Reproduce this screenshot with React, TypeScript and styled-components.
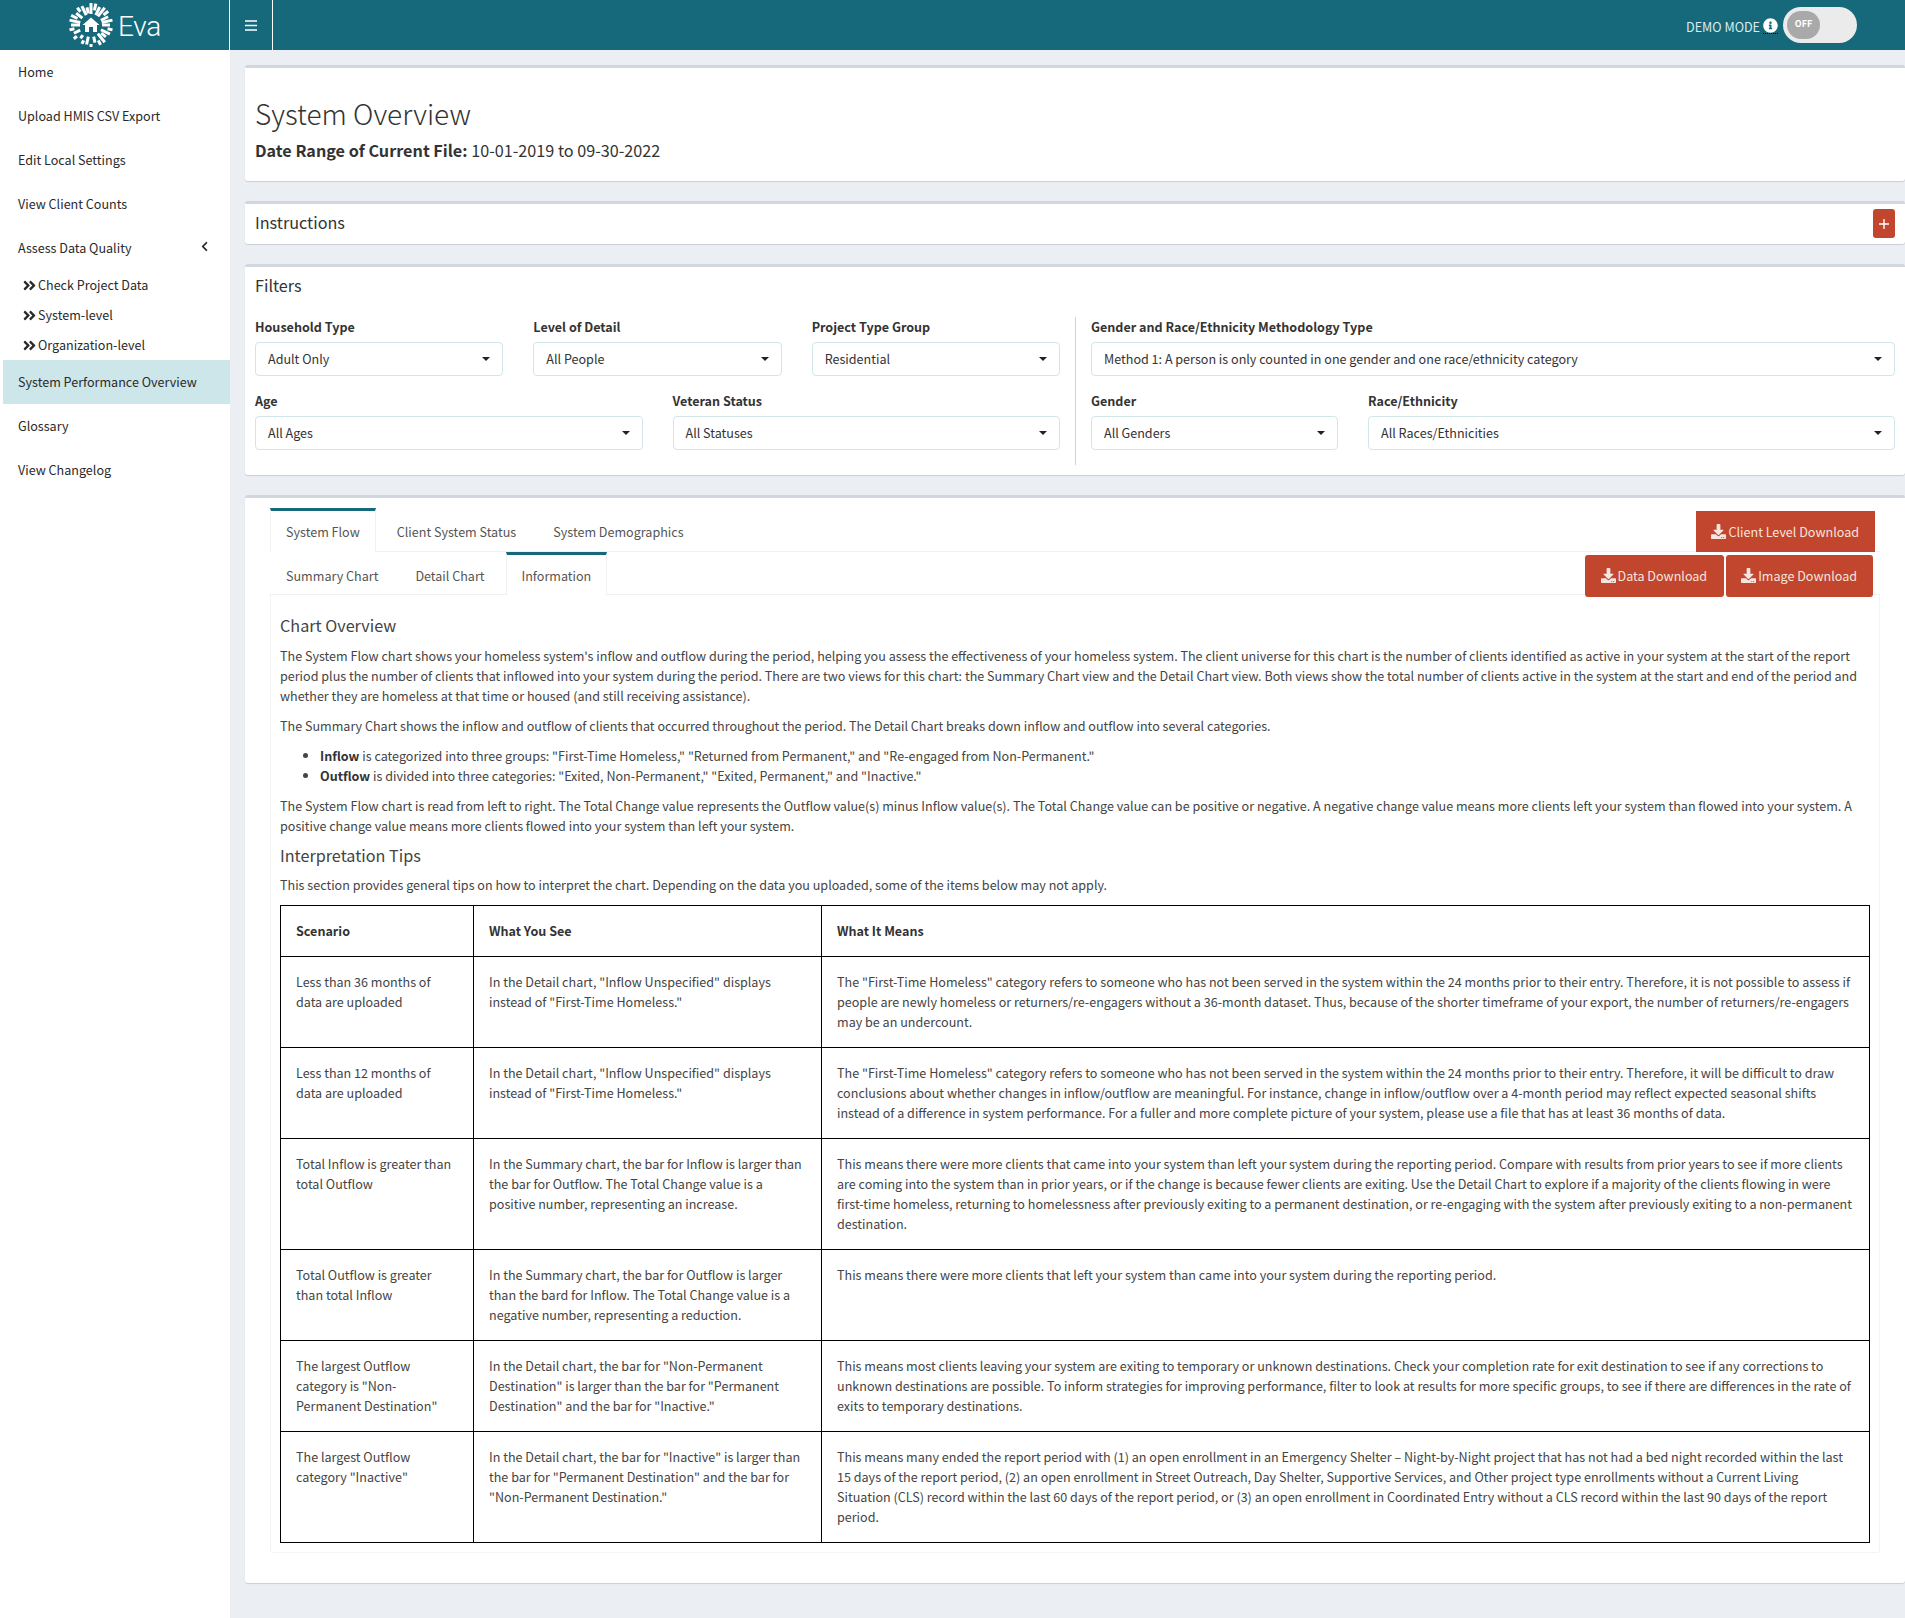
import React from "react";
import styled, { createGlobalStyle } from "styled-components";
import { FaAngleDoubleRight, FaChevronLeft, FaDownload, FaInfoCircle } from "react-icons/fa";

const TEAL = "#16697a";
const RED = "#c1462d";
const FONT = `"Noto Sans CJK SC", "Noto Sans", "Liberation Sans", sans-serif`;

const Global = createGlobalStyle`
  html, body { margin: 0; padding: 0; background: #ebeef3; }
  body { font-family: ${FONT}; font-size: 12.57px; line-height: 20px; color: #444; }
  * { box-sizing: border-box; }
`;

const Page = styled.div`
  width: 1905px;
  height: 1618px;
  display: flex;
  flex-direction: column;
  overflow: hidden;
`;

const Header = styled.header`
  height: 50px;
  flex: none;
  background: ${TEAL};
  display: flex;
  align-items: stretch;
`;

const Brand = styled.div`
  width: 230px;
  border-right: 1px solid #fff;
  display: flex;
  align-items: center;
  justify-content: center;
  gap: 4px;
  color: #fff;
`;

const BrandName = styled.span`
  font-family: Roboto, sans-serif;
  font-weight: 300;
  font-size: 28px;
  line-height: 50px;
  padding-top: 3px;
  letter-spacing: -0.2px;
`;

const Burger = styled.div`
  width: 43px;
  border-right: 1px solid #fff;
  display: flex;
  align-items: center;
  justify-content: center;
`;

const HeaderRight = styled.div`
  margin-left: auto;
  margin-right: 48px;
  display: flex;
  align-items: center;
  color: #dcebef;
`;

const DemoLabel = styled.span`
  margin-right: 3px;
  padding-top: 4px;
`;

const InfoWrap = styled.span`
  display: flex;
  color: #fff;
  font-size: 15px;
  border-bottom: 1px dotted #000;
  margin: 1px 5px 0 0;
`;

const Toggle = styled.div`
  width: 74px;
  height: 36px;
  border-radius: 18px;
  background: #ebebeb;
  padding: 4px;
`;

const Thumb = styled.div`
  width: 33px;
  height: 28px;
  border-radius: 14px;
  background: #a9a9a9;
  color: #fff;
  font-size: 9px;
  font-weight: 700;
  line-height: 26px;
  text-align: center;
`;

const Body = styled.div`
  flex: 1;
  display: flex;
  min-height: 0;
`;

const Sidebar = styled.nav`
  width: 230px;
  flex: none;
  background: #fff;
  color: #2a2a2a;
  padding-left: 3px;
`;

const NavItem = styled.div<{ $active?: boolean }>`
  height: 44px;
  display: flex;
  align-items: center;
  justify-content: space-between;
  padding: 0 20px 0 15px;
  background: ${(p) => (p.$active ? "#cde6ea" : "transparent")};
  svg { margin-top: -3px; }
`;

const SubItem = styled.div`
  height: 30px;
  display: flex;
  align-items: center;
  gap: 1px;
  padding-left: 19px;
`;

const Main = styled.main`
  flex: 1;
  min-width: 0;
  padding: 15px 0 0 15px;
  display: flex;
  flex-direction: column;
  gap: 20px;
`;

const Box = styled.section`
  background: #fff;
  border-top: 3px solid #d2d6de;
  border-radius: 3px;
  box-shadow: 0 1px 1px rgba(0, 0, 0, 0.14);
`;

const TitleBox = styled(Box)`
  height: 116px;
  padding: 25px 10px 0;
`;

const PageTitle = styled.h1`
  margin: 0;
  font-size: 28px;
  line-height: 40px;
  font-weight: 300;
  color: #333;
`;

const DateLine = styled.p`
  margin: 5px 0 0;
  font-size: 16.2px;
  line-height: 24px;
  color: #333;
  strong { font-weight: 700; }
`;

const InstructionBox = styled(Box)`
  height: 43px;
  display: flex;
  align-items: center;
  justify-content: space-between;
  padding: 0 10px 1px;
`;

const BoxTitle = styled.h3`
  margin: 0;
  font-size: 16.2px;
  line-height: 20px;
  font-weight: 400;
  color: #333;
`;

const InstructionTitle = styled(BoxTitle)`
  padding-bottom: 4px;
`;

const PlusButton = styled.button`
  width: 22px;
  height: 29px;
  border: 0;
  padding: 0;
  border-radius: 3px;
  background: ${RED};
  display: flex;
  align-items: center;
  justify-content: center;
`;

const FilterBox = styled(Box)`
  height: 211px;
  padding: 8px 10px 10px;
`;

const FilterGrid = styled.div`
  margin-top: 22px;
  display: grid;
  grid-template-columns: 805px 1fr;
`;

const FilterSide = styled.div<{ $divided?: boolean }>`
  display: flex;
  flex-direction: column;
  gap: 15px;
  padding-left: ${(p) => (p.$divided ? "15px" : "0")};
  margin-left: ${(p) => (p.$divided ? "15px" : "0")};
  padding-bottom: 15px;
  border-left: ${(p) => (p.$divided ? "1px solid #d2d2d2" : "0")};
`;

const FilterRow = styled.div<{ $cols: string }>`
  display: grid;
  grid-template-columns: ${(p) => p.$cols};
  gap: 30px;
`;

const FieldLabel = styled.label`
  display: block;
  font-weight: 700;
  margin-bottom: 5px;
  color: #333;
`;

const Select = styled.div`
  height: 34px;
  display: flex;
  align-items: center;
  justify-content: space-between;
  padding: 0 12px;
  border: 1px solid #d2e6ea;
  border-radius: 4px;
  color: #333;
  white-space: nowrap;
`;

const Caret = styled.span`
  width: 0;
  height: 0;
  border-left: 4px solid transparent;
  border-right: 4px solid transparent;
  border-top: 4px solid #222;
`;

const TabsBox = styled(Box)`
  height: 1088px;
  padding: 10px 25px 0;
`;

const TabBar = styled.div<{ $height: number }>`
  height: ${(p) => p.$height}px;
  display: flex;
  align-items: stretch;
  border-bottom: 1px solid #f1f1f1;
`;

const Tab = styled.div<{ $active?: boolean }>`
  padding: 1px 15px 0;
  margin-right: 5px;
  display: flex;
  align-items: center;
  color: #555;
  border-top: 3px solid ${(p) => (p.$active ? TEAL : "transparent")};
  border-left: 1px solid ${(p) => (p.$active ? "#f1f1f1" : "transparent")};
  border-right: 1px solid ${(p) => (p.$active ? "#f1f1f1" : "transparent")};
  ${(p) => (p.$active ? "margin-bottom: -1px; background: #fff;" : "")}
`;

const SubTab = styled(Tab)`
  padding-top: 2px;
`;

const BarActions = styled.div<{ $gap: number; $end: number }>`
  margin-left: auto;
  margin-right: ${(p) => p.$end}px;
  display: flex;
  gap: ${(p) => p.$gap}px;
`;

const DownloadButton = styled.button`
  border: 0;
  background: ${RED};
  color: #f6e4df;
  font-family: ${FONT};
  font-size: 12.57px;
  padding: 0 16px 0 15.5px;
  display: flex;
  align-items: center;
  gap: 2px;
  height: 41px;
  margin-top: 3px;
  svg { font-size: 15px; }
`;

const RoundedDownload = styled(DownloadButton)<{ $wide?: boolean }>`
  padding: ${(p) => (p.$wide ? "0 17px 2px 16px" : "0 16px 2px 15px")};
  border-radius: 3px;
  height: 42px;
`;

const TabPane = styled.div`
  height: 958px;
  padding: 10px 9px 0;
  border: 1px solid #f4f4f4;
  border-top: 0;
  border-radius: 0 0 3px 3px;
`;

const SectionHeading = styled.h4<{ $tight?: boolean }>`
  margin: ${(p) => (p.$tight ? "-1px 0 10px" : "10px 0 11px")};
  font-size: 16.2px;
  line-height: 20px;
  font-weight: 400;
  color: #444;
`;

const Para = styled.p`
  margin: 0 0 10px;
`;

const BulletList = styled.ul`
  margin: 0 0 10px;
  padding-left: 40px;
  b { font-weight: 700; color: #333; }
`;

const TipsTable = styled.table`
  width: 100%;
  table-layout: fixed;
  border-collapse: collapse;
  th, td {
    border: 1px solid #000;
    padding: 15px;
    vertical-align: top;
    text-align: left;
  }
  th { font-weight: 700; color: #333; }
`;

const rayData: [number, number][] = [
  [11, 19], [17, 22], [11, 21], [13, 19], [11, 22], [17, 22], [12, 18], [19, 22], [12, 20], [17, 21],
  [13, 17], [18, 22], [12, 19], [17, 22], [11, 20], [11, 22], [15, 22], [11, 19], [17, 22], [11, 21],
  [12, 18], [11, 22], [15, 22], [11, 20], [11, 22], [16, 22], [11, 19], [11, 22],
];

const Logo = () => (
  <svg width="46" height="46" viewBox="-23 -23 46 46" aria-hidden="true">
    {rayData.map(([a, b], i) => {
      const t = (i / rayData.length) * Math.PI * 2;
      return (
        <line
          key={i}
          x1={Math.cos(t) * a}
          y1={Math.sin(t) * a}
          x2={Math.cos(t) * b}
          y2={Math.sin(t) * b}
          stroke="#fff"
          strokeWidth="3"
        />
      );
    })}
    <path d="M0 -7.5 L8.5 0 L6 0 L6 7 L2 7 L2 2 L-2 2 L-2 7 L-6 7 L-6 0 L-8.5 0 Z" fill="#fff" />
  </svg>
);

const BurgerIcon = () => (
  <svg width="12" height="11" viewBox="0 0 12 11" aria-hidden="true">
    <path d="M0 1h12M0 5.5h12M0 10h12" stroke="#fff" strokeWidth="1.5" />
  </svg>
);

const PlusIcon = () => (
  <svg width="10" height="10" viewBox="0 0 10 10" aria-hidden="true">
    <path d="M5 0v10M0 5h10" stroke="#fff" strokeWidth="1.4" />
  </svg>
);

const rows = [
  [
    "Less than 36 months of data are uploaded",
    `In the Detail chart, "Inflow Unspecified" displays instead of "First-Time Homeless."`,
    `The "First-Time Homeless" category refers to someone who has not been served in the system within the 24 months prior to their entry. Therefore, it is not possible to assess if people are newly homeless or returners/re-engagers without a 36-month dataset. Thus, because of the shorter timeframe of your export, the number of returners/re-engagers may be an undercount.`,
  ],
  [
    "Less than 12 months of data are uploaded",
    `In the Detail chart, "Inflow Unspecified" displays instead of "First-Time Homeless."`,
    `The "First-Time Homeless" category refers to someone who has not been served in the system within the 24 months prior to their entry. Therefore, it will be difficult to draw conclusions about whether changes in inflow/outflow are meaningful. For instance, change in inflow/outflow over a 4-month period may reflect expected seasonal shifts instead of a difference in system performance. For a fuller and more complete picture of your system, please use a file that has at least 36 months of data.`,
  ],
  [
    "Total Inflow is greater than total Outflow",
    "In the Summary chart, the bar for Inflow is larger than the bar for Outflow. The Total Change value is a positive number, representing an increase.",
    "This means there were more clients that came into your system than left your system during the reporting period. Compare with results from prior years to see if more clients are coming into the system than in prior years, or if the change is because fewer clients are exiting. Use the Detail Chart to explore if a majority of the clients flowing in were first-time homeless, returning to homelessness after previously exiting to a permanent destination, or re-engaging with the system after previously exiting to a non-permanent destination.",
  ],
  [
    "Total Outflow is greater than total Inflow",
    "In the Summary chart, the bar for Outflow is larger than the bard for Inflow. The Total Change value is a negative number, representing a reduction.",
    "This means there were more clients that left your system than came into your system during the reporting period.",
  ],
  [
    `The largest Outflow category is "Non-Permanent Destination"`,
    `In the Detail chart, the bar for "Non-Permanent Destination" is larger than the bar for "Permanent Destination" and the bar for "Inactive."`,
    "This means most clients leaving your system are exiting to temporary or unknown destinations. Check your completion rate for exit destination to see if any corrections to unknown destinations are possible. To inform strategies for improving performance, filter to look at results for more specific groups, to see if there are differences in the rate of exits to temporary destinations.",
  ],
  [
    `The largest Outflow category "Inactive"`,
    `In the Detail chart, the bar for "Inactive" is larger than the bar for "Permanent Destination" and the bar for "Non-Permanent Destination."`,
    "This means many ended the report period with (1) an open enrollment in an Emergency Shelter – Night-by-Night project that has not had a bed night recorded within the last 15 days of the report period, (2) an open enrollment in Street Outreach, Day Shelter, Supportive Services, and Other project type enrollments without a Current Living Situation (CLS) record within the last 60 days of the report period, or (3) an open enrollment in Coordinated Entry without a CLS record within the last 90 days of the report period.",
  ],
];

const Field = ({ label, value }: { label: string; value: string }) => (
  <div>
    <FieldLabel>{label}</FieldLabel>
    <Select>
      {value}
      <Caret />
    </Select>
  </div>
);

export default function App() {
  return (
    <Page>
      <Global />
      <Header>
        <Brand>
          <Logo />
          <BrandName>Eva</BrandName>
        </Brand>
        <Burger>
          <BurgerIcon />
        </Burger>
        <HeaderRight>
          <DemoLabel>DEMO MODE</DemoLabel>
          <InfoWrap>
            <FaInfoCircle />
          </InfoWrap>
          <Toggle>
            <Thumb>OFF</Thumb>
          </Toggle>
        </HeaderRight>
      </Header>
      <Body>
        <Sidebar>
          <NavItem>Home</NavItem>
          <NavItem>Upload HMIS CSV Export</NavItem>
          <NavItem>Edit Local Settings</NavItem>
          <NavItem>View Client Counts</NavItem>
          <NavItem>
            Assess Data Quality
            <FaChevronLeft size={11} />
          </NavItem>
          <SubItem>
            <FaAngleDoubleRight size={15} />
            Check Project Data
          </SubItem>
          <SubItem>
            <FaAngleDoubleRight size={15} />
            System-level
          </SubItem>
          <SubItem>
            <FaAngleDoubleRight size={15} />
            Organization-level
          </SubItem>
          <NavItem $active>System Performance Overview</NavItem>
          <NavItem>Glossary</NavItem>
          <NavItem>View Changelog</NavItem>
        </Sidebar>
        <Main>
          <TitleBox>
            <PageTitle>System Overview</PageTitle>
            <DateLine>
              <strong>Date Range of Current File:</strong> 10-01-2019 to 09-30-2022
            </DateLine>
          </TitleBox>
          <InstructionBox>
            <InstructionTitle>Instructions</InstructionTitle>
            <PlusButton>
              <PlusIcon />
            </PlusButton>
          </InstructionBox>
          <FilterBox>
            <BoxTitle>Filters</BoxTitle>
            <FilterGrid>
              <FilterSide>
                <FilterRow $cols="1fr 1fr 1fr">
                  <Field label="Household Type" value="Adult Only" />
                  <Field label="Level of Detail" value="All People" />
                  <Field label="Project Type Group" value="Residential" />
                </FilterRow>
                <FilterRow $cols="1fr 1fr">
                  <Field label="Age" value="All Ages" />
                  <Field label="Veteran Status" value="All Statuses" />
                </FilterRow>
              </FilterSide>
              <FilterSide $divided>
                <FilterRow $cols="1fr">
                  <Field
                    label="Gender and Race/Ethnicity Methodology Type"
                    value="Method 1: A person is only counted in one gender and one race/ethnicity category"
                  />
                </FilterRow>
                <FilterRow $cols="247px 1fr">
                  <Field label="Gender" value="All Genders" />
                  <Field label="Race/Ethnicity" value="All Races/Ethnicities" />
                </FilterRow>
              </FilterSide>
            </FilterGrid>
          </FilterBox>
          <TabsBox>
            <TabBar $height={44}>
              <Tab $active>System Flow</Tab>
              <Tab>Client System Status</Tab>
              <Tab>System Demographics</Tab>
              <BarActions $gap={0} $end={5}>
                <DownloadButton>
                  <FaDownload />
                  Client Level Download
                </DownloadButton>
              </BarActions>
            </TabBar>
            <TabBar $height={43}>
              <SubTab>Summary Chart</SubTab>
              <SubTab>Detail Chart</SubTab>
              <Tab $active>Information</Tab>
              <BarActions $gap={2} $end={7}>
                <RoundedDownload $wide>
                  <FaDownload />
                  Data Download
                </RoundedDownload>
                <RoundedDownload>
                  <FaDownload />
                  Image Download
                </RoundedDownload>
              </BarActions>
            </TabBar>
            <TabPane>
              <SectionHeading>Chart Overview</SectionHeading>
              <Para>
                The System Flow chart shows your homeless system's inflow and outflow during the period, helping you assess the effectiveness of your homeless system. The client universe for this chart is the number of clients identified as active in your system at the start of the report period plus the number of clients that inflowed into your system during the period. There are two views for this chart: the Summary Chart view and the Detail Chart view. Both views show the total number of clients active in the system at the start and end of the period and whether they are homeless at that time or housed (and still receiving assistance).
              </Para>
              <Para>
                The Summary Chart shows the inflow and outflow of clients that occurred throughout the period. The Detail Chart breaks down inflow and outflow into several categories.
              </Para>
              <BulletList>
                <li>
                  <b>Inflow</b> is categorized into three groups: "First-Time Homeless," "Returned from Permanent," and "Re-engaged from Non-Permanent."
                </li>
                <li>
                  <b>Outflow</b> is divided into three categories: "Exited, Non-Permanent," "Exited, Permanent," and "Inactive."
                </li>
              </BulletList>
              <Para>
                The System Flow chart is read from left to right. The Total Change value represents the Outflow value(s) minus Inflow value(s). The Total Change value can be positive or negative. A negative change value means more clients left your system than flowed into your system. A positive change value means more clients flowed into your system than left your system.
              </Para>
              <SectionHeading $tight>Interpretation Tips</SectionHeading>
              <Para>
                This section provides general tips on how to interpret the chart. Depending on the data you uploaded, some of the items below may not apply.
              </Para>
              <TipsTable>
                <colgroup>
                  <col width="193" />
                  <col width="348" />
                  <col />
                </colgroup>
                <thead>
                  <tr>
                    <th>Scenario</th>
                    <th>What You See</th>
                    <th>What It Means</th>
                  </tr>
                </thead>
                <tbody>
                  {rows.map((r) => (
                    <tr key={r[0]}>
                      <td>{r[0]}</td>
                      <td>{r[1]}</td>
                      <td>{r[2]}</td>
                    </tr>
                  ))}
                </tbody>
              </TipsTable>
            </TabPane>
          </TabsBox>
        </Main>
      </Body>
    </Page>
  );
}
